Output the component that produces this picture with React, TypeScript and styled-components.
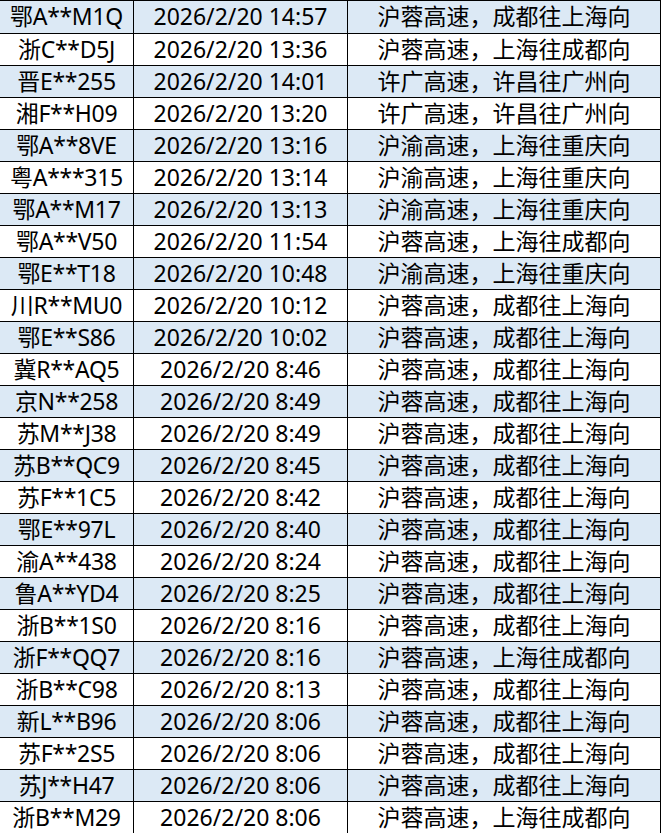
import { createGlobalStyle } from "styled-components";
import styled from "styled-components";

const GlobalStyle = createGlobalStyle`
  html, body {
    margin: 0;
    padding: 0;
    background: #ffffff;
  }
  body {
    font-family: "Noto Sans", "Noto Sans CJK SC", sans-serif;
    color: #000;
  }
`;

const Table = styled.div`
  width: 661px;
  border-top: 1px solid #000;
`;

const Row = styled.div<{ $shade: boolean }>`
  display: grid;
  grid-template-columns: 134px 214px 313px;
  height: 32px;
  background: ${(p) => (p.$shade ? "#dce9f5" : "#ffffff")};

  &:first-child {
    height: 33px;
  }
`;

const Cell = styled.div<{ $tight?: boolean }>`
  display: flex;
  align-items: center;
  justify-content: center;
  border-right: 1px solid #000;
  border-bottom: 1px solid #000;
  font-size: 23px;
  line-height: 1;
  white-space: nowrap;
  overflow: hidden;
  padding-bottom: 1px;
  letter-spacing: ${(p) => (p.$tight ? "-0.3px" : "0")};
`;

type Record = [string, string, string];

const rows: Record[] = [
  ["鄂A**M1Q", "2026/2/20 14:57", "沪蓉高速，成都往上海向"],
  ["浙C**D5J", "2026/2/20 13:36", "沪蓉高速，上海往成都向"],
  ["晋E**255", "2026/2/20 14:01", "许广高速，许昌往广州向"],
  ["湘F**H09", "2026/2/20 13:20", "许广高速，许昌往广州向"],
  ["鄂A**8VE", "2026/2/20 13:16", "沪渝高速，上海往重庆向"],
  ["粤A***315", "2026/2/20 13:14", "沪渝高速，上海往重庆向"],
  ["鄂A**M17", "2026/2/20 13:13", "沪渝高速，上海往重庆向"],
  ["鄂A**V50", "2026/2/20 11:54", "沪蓉高速，上海往成都向"],
  ["鄂E**T18", "2026/2/20 10:48", "沪渝高速，上海往重庆向"],
  ["川R**MU0", "2026/2/20 10:12", "沪蓉高速，成都往上海向"],
  ["鄂E**S86", "2026/2/20 10:02", "沪蓉高速，成都往上海向"],
  ["冀R**AQ5", "2026/2/20 8:46", "沪蓉高速，成都往上海向"],
  ["京N**258", "2026/2/20 8:49", "沪蓉高速，成都往上海向"],
  ["苏M**J38", "2026/2/20 8:49", "沪蓉高速，成都往上海向"],
  ["苏B**QC9", "2026/2/20 8:45", "沪蓉高速，成都往上海向"],
  ["苏F**1C5", "2026/2/20 8:42", "沪蓉高速，成都往上海向"],
  ["鄂E**97L", "2026/2/20 8:40", "沪蓉高速，成都往上海向"],
  ["渝A**438", "2026/2/20 8:24", "沪蓉高速，成都往上海向"],
  ["鲁A**YD4", "2026/2/20 8:25", "沪蓉高速，成都往上海向"],
  ["浙B**1S0", "2026/2/20 8:16", "沪蓉高速，成都往上海向"],
  ["浙F**QQ7", "2026/2/20 8:16", "沪蓉高速，上海往成都向"],
  ["浙B**C98", "2026/2/20 8:13", "沪蓉高速，成都往上海向"],
  ["新L**B96", "2026/2/20 8:06", "沪蓉高速，成都往上海向"],
  ["苏F**2S5", "2026/2/20 8:06", "沪蓉高速，成都往上海向"],
  ["苏J**H47", "2026/2/20 8:06", "沪蓉高速，成都往上海向"],
  ["浙B**M29", "2026/2/20 8:06", "沪蓉高速，上海往成都向"],
];

export default function App() {
  return (
    <>
      <GlobalStyle />
      <Table>
        {rows.map((r, i) => (
          <Row key={i} $shade={i % 2 === 0}>
            <Cell $tight>{r[0]}</Cell>
            <Cell>{r[1]}</Cell>
            <Cell>{r[2]}</Cell>
          </Row>
        ))}
      </Table>
    </>
  );
}
